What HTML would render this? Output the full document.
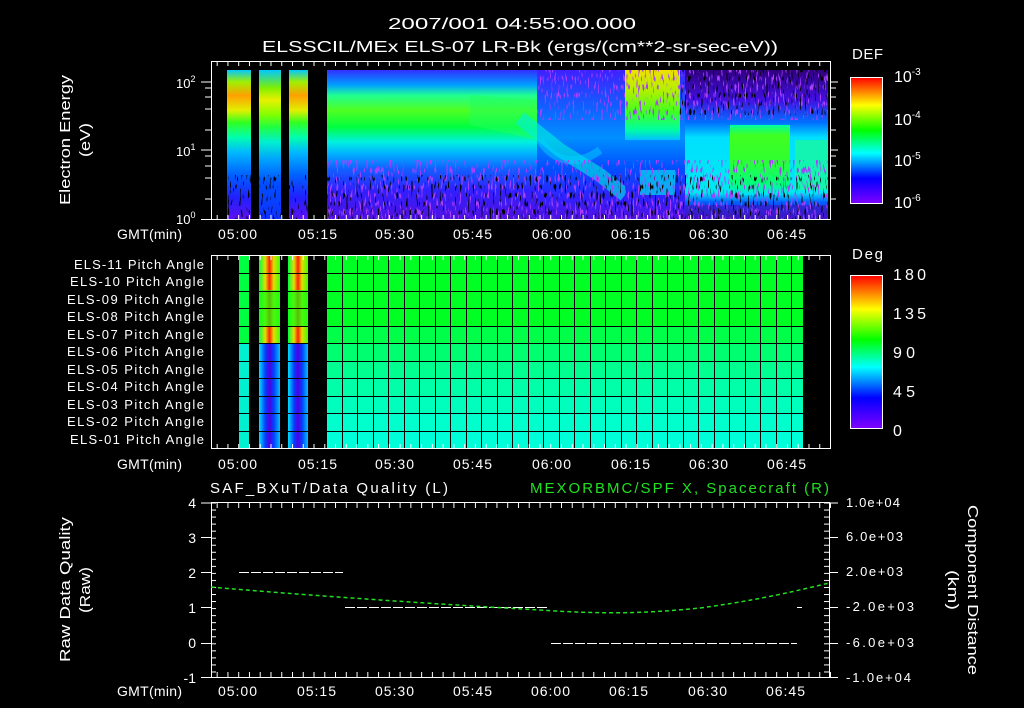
<!DOCTYPE html>
<html><head><meta charset="utf-8"><style>
html,body{margin:0;padding:0;background:#000;width:1024px;height:708px;overflow:hidden}
svg{display:block}
text{font-family:"Liberation Sans",sans-serif;fill:#fff}
</style></head><body>
<svg width="1024" height="708" viewBox="0 0 1024 708" xmlns="http://www.w3.org/2000/svg">
<defs>
<filter id="spk" x="0" y="0" width="100%" height="100%" filterUnits="objectBoundingBox"><feTurbulence type="fractalNoise" baseFrequency="0.6 0.12" numOctaves="1" seed="3"/><feColorMatrix type="matrix" values="0 0 0 0 0  0 0 0 0 0  0 0 0 0 0  14 0 0 0 -8.6"/></filter>
<filter id="spkp" x="0" y="0" width="100%" height="100%" filterUnits="objectBoundingBox"><feTurbulence type="fractalNoise" baseFrequency="0.6 0.12" numOctaves="1" seed="7"/><feColorMatrix type="matrix" values="0 0 0 0 0.4  0 0 0 0 0.05  0 0 0 0 1  14 0 0 0 -8.2"/></filter>
<linearGradient id="early" x1="0" y1="70" x2="0" y2="220" gradientUnits="userSpaceOnUse">
<stop offset="0" stop-color="#00c8ff"/><stop offset="0.08" stop-color="#a0f000"/><stop offset="0.17" stop-color="#ffa000"/><stop offset="0.27" stop-color="#e0f000"/><stop offset="0.35" stop-color="#30ff20"/><stop offset="0.45" stop-color="#00ffb0"/><stop offset="0.55" stop-color="#00b8ff"/><stop offset="0.7" stop-color="#0060ff"/><stop offset="0.85" stop-color="#2020ff"/><stop offset="1" stop-color="#6010f0"/>
</linearGradient>
<linearGradient id="early2" x1="0" y1="70" x2="0" y2="220" gradientUnits="userSpaceOnUse">
<stop offset="0" stop-color="#00c8ff"/><stop offset="0.12" stop-color="#80f000"/><stop offset="0.2" stop-color="#e8f000"/><stop offset="0.3" stop-color="#80ff00"/><stop offset="0.38" stop-color="#20ff40"/><stop offset="0.48" stop-color="#00f0d0"/><stop offset="0.6" stop-color="#00a0ff"/><stop offset="0.75" stop-color="#0050ff"/><stop offset="1" stop-color="#1030ff"/>
</linearGradient>
<linearGradient id="main" x1="0" y1="70" x2="0" y2="220" gradientUnits="userSpaceOnUse">
<stop offset="0" stop-color="#3030ff"/><stop offset="0.1" stop-color="#00a0ff"/><stop offset="0.17" stop-color="#20ff90"/><stop offset="0.27" stop-color="#50ff20"/><stop offset="0.38" stop-color="#00ff40"/><stop offset="0.48" stop-color="#00f0e0"/><stop offset="0.56" stop-color="#00b0ff"/><stop offset="0.66" stop-color="#1060ff"/><stop offset="0.8" stop-color="#3020ff"/><stop offset="1" stop-color="#5010e0"/>
</linearGradient>
<linearGradient id="mid" x1="0" y1="70" x2="0" y2="220" gradientUnits="userSpaceOnUse">
<stop offset="0" stop-color="#4020ff"/><stop offset="0.25" stop-color="#1060ff"/><stop offset="0.45" stop-color="#0090ff"/><stop offset="0.65" stop-color="#0050ff"/><stop offset="0.85" stop-color="#3020ff"/><stop offset="1" stop-color="#5010e0"/>
</linearGradient>
<linearGradient id="burst" x1="0" y1="70" x2="0" y2="140" gradientUnits="userSpaceOnUse">
<stop offset="0" stop-color="#f0e000"/><stop offset="0.3" stop-color="#b0f000"/><stop offset="0.6" stop-color="#40ff20"/><stop offset="0.85" stop-color="#00ffa0"/><stop offset="1" stop-color="#00c0ff"/>
</linearGradient>
<linearGradient id="late" x1="0" y1="70" x2="0" y2="220" gradientUnits="userSpaceOnUse">
<stop offset="0" stop-color="#300080"/><stop offset="0.2" stop-color="#4010e0"/><stop offset="0.35" stop-color="#0070ff"/><stop offset="0.45" stop-color="#00e0ff"/><stop offset="0.82" stop-color="#00e8f0"/><stop offset="0.88" stop-color="#0060ff"/><stop offset="1" stop-color="#4010d0"/>
</linearGradient>
<linearGradient id="lategreen" x1="0" y1="125" x2="0" y2="195" gradientUnits="userSpaceOnUse">
<stop offset="0" stop-color="#00ffa0"/><stop offset="0.15" stop-color="#40ff20"/><stop offset="0.5" stop-color="#30ff30"/><stop offset="0.85" stop-color="#00ff80"/><stop offset="1" stop-color="#00e0ff"/>
</linearGradient>
<linearGradient id="cbar1" x1="0" y1="0" x2="0" y2="1">
<stop offset="0" stop-color="#ff0000"/><stop offset="0.22" stop-color="#ffff00"/><stop offset="0.42" stop-color="#00ff00"/><stop offset="0.6" stop-color="#00ffff"/><stop offset="0.8" stop-color="#0000ff"/><stop offset="1" stop-color="#8000ff"/>
</linearGradient>
<linearGradient id="pa1" x1="0" y1="0" x2="1" y2="0">
<stop offset="0" stop-color="#00ff40"/><stop offset="0.3" stop-color="#e0e000"/><stop offset="0.5" stop-color="#ff2000"/><stop offset="0.7" stop-color="#e0e000"/><stop offset="1" stop-color="#40ff00"/>
</linearGradient>
<linearGradient id="pa2" x1="0" y1="0" x2="1" y2="0">
<stop offset="0" stop-color="#00e0ff"/><stop offset="0.3" stop-color="#0040ff"/><stop offset="0.5" stop-color="#5000e0"/><stop offset="0.7" stop-color="#0040ff"/><stop offset="1" stop-color="#00c0ff"/>
</linearGradient>
<pattern id="tt" x="0" y="0" width="10.76" height="10" patternUnits="userSpaceOnUse" patternTransform="translate(238.2 0)"><rect x="0" y="0" width="1" height="10" fill="#fff"/></pattern>
<pattern id="ltk" x="0" y="0" width="10" height="7.04" patternUnits="userSpaceOnUse" patternTransform="translate(0 502.5)"><rect x="0" y="0" width="10" height="1" fill="#fff"/></pattern>
</defs>

<text x="388" y="29" font-size="16" textLength="248" lengthAdjust="spacingAndGlyphs">2007/001 04:55:00.000</text>
<text x="262" y="52" font-size="16" textLength="516" lengthAdjust="spacingAndGlyphs">ELSSCIL/MEx ELS-07 LR-Bk  (ergs/(cm**2-sr-sec-eV))</text>

<rect x="227" y="70" width="24" height="150" fill="url(#early)"/>
<rect x="259" y="70" width="22" height="150" fill="url(#early2)"/>
<rect x="289" y="70" width="19" height="150" fill="url(#early)"/>
<rect x="327" y="70" width="210" height="150" fill="url(#main)"/>
<rect x="537" y="70" width="88" height="150" fill="url(#mid)"/>
<polygon points="470,95 537,100 537,140 470,125" fill="#20ff60" opacity="0.5"/>
<path d="M520,118 L560,150 L600,175 L625,195" stroke="#00f0e0" stroke-width="14" fill="none" opacity="0.6"/>
<path d="M540,140 C555,165 580,165 600,150" stroke="#00d0ff" stroke-width="8" fill="none" opacity="0.5"/>
<rect x="625" y="70" width="60" height="150" fill="url(#mid)"/>
<rect x="625" y="70" width="55" height="70" fill="url(#burst)"/>
<rect x="640" y="170" width="35" height="25" fill="#00e0f0" opacity="0.7"/>
<rect x="685" y="70" width="143" height="150" fill="url(#late)"/>
<rect x="730" y="125" width="60" height="70" fill="url(#lategreen)"/>
<rect x="795" y="140" width="33" height="50" fill="#20ff80" opacity="0.6"/>
<rect x="685" y="205" width="143" height="15" fill="#4010c0" opacity="0.6"/>
<rect x="327" y="160" width="501" height="60" filter="url(#spkp)"/>
<rect x="537" y="70" width="291" height="50" filter="url(#spkp)"/>
<rect x="227" y="175" width="601" height="45" filter="url(#spk)"/>
<rect x="680" y="70" width="148" height="45" filter="url(#spk)"/>
<rect x="251" y="62" width="8" height="158" fill="#000"/>
<rect x="281" y="62" width="8" height="158" fill="#000"/>
<rect x="308" y="62" width="19" height="158" fill="#000"/>
<rect x="211.5" y="61.5" width="619" height="158" fill="none" stroke="#fff"/>
<rect x="211" y="62" width="620" height="4" fill="url(#tt)"/>
<rect x="211" y="215" width="620" height="5" fill="url(#tt)"/>
<g stroke="#fff">
<line x1="201" y1="82" x2="211" y2="82"/><line x1="201" y1="150" x2="211" y2="150"/><line x1="201" y1="219.5" x2="211" y2="219.5"/>
<line x1="205" y1="88" x2="211" y2="88"/><line x1="205" y1="97" x2="211" y2="97"/><line x1="205" y1="109" x2="211" y2="109"/><line x1="205" y1="130" x2="211" y2="130"/>
<line x1="205" y1="156" x2="211" y2="156"/><line x1="205" y1="166" x2="211" y2="166"/><line x1="205" y1="178" x2="211" y2="178"/><line x1="205" y1="199" x2="211" y2="199"/>
<line x1="831" y1="82" x2="838" y2="82"/><line x1="831" y1="88" x2="836" y2="88"/><line x1="831" y1="97" x2="836" y2="97"/><line x1="831" y1="109" x2="836" y2="109"/><line x1="831" y1="130" x2="836" y2="130"/><line x1="831" y1="150" x2="838" y2="150"/><line x1="831" y1="156" x2="836" y2="156"/><line x1="831" y1="166" x2="836" y2="166"/><line x1="831" y1="178" x2="836" y2="178"/><line x1="831" y1="199" x2="836" y2="199"/>
</g>
<text x="176" y="88" font-size="13">10<tspan dy="-6" font-size="9">2</tspan></text>
<text x="176" y="156" font-size="13">10<tspan dy="-6" font-size="9">1</tspan></text>
<text x="176" y="224" font-size="13">10<tspan dy="-6" font-size="9">0</tspan></text>
<text transform="translate(70,205) rotate(-90)" font-size="15" textLength="130" lengthAdjust="spacingAndGlyphs">Electron Energy</text>
<text transform="translate(90,157) rotate(-90)" font-size="15" textLength="34" lengthAdjust="spacingAndGlyphs">(eV)</text>
<g font-size="14">
<text x="218" y="239" textLength="39">05:00</text><text x="298" y="239" textLength="39">05:15</text><text x="375" y="239" textLength="39">05:30</text><text x="453" y="239" textLength="39">05:45</text><text x="532" y="239" textLength="39">06:00</text><text x="611" y="239" textLength="39">06:15</text><text x="689" y="239" textLength="39">06:30</text><text x="767" y="239" textLength="39">06:45</text>
</g>
<text x="117" y="239" font-size="14" textLength="65">GMT(min)</text>

<text x="852" y="59" font-size="15" textLength="31">DEF</text>
<rect x="850.5" y="77.5" width="32" height="126" fill="url(#cbar1)" stroke="#fff"/>
<g font-size="16"><text x="894" y="82">10<tspan dy="-7" font-size="10">-3</tspan></text><text x="894" y="125">10<tspan dy="-7" font-size="10">-4</tspan></text><text x="894" y="166">10<tspan dy="-7" font-size="10">-5</tspan></text><text x="894" y="208">10<tspan dy="-7" font-size="10">-6</tspan></text></g>

<rect x="239" y="256" width="10" height="193" fill="#00ff40"/>
<rect x="239" y="344" width="10" height="105" fill="#00f0d0"/>
<rect x="259" y="256" width="21" height="88" fill="url(#pa1)"/>
<rect x="259" y="344" width="21" height="105" fill="url(#pa2)"/>
<rect x="288" y="256" width="20" height="88" fill="url(#pa1)"/>
<rect x="288" y="344" width="20" height="105" fill="url(#pa2)"/>
<rect x="259" y="290" width="21" height="36" fill="#10ff10" opacity="0.7"/>
<rect x="288" y="290" width="20" height="36" fill="#10ff10" opacity="0.7"/>
<rect x="327" y="256" width="476" height="71" fill="#00ff22"/>
<rect x="327" y="326" width="476" height="18" fill="#00ff48"/>
<rect x="327" y="344" width="476" height="18" fill="#00ff70"/>
<rect x="327" y="361" width="476" height="18" fill="#00ff90"/>
<rect x="327" y="379" width="476" height="18" fill="#00ffa8"/>
<rect x="327" y="396" width="476" height="18" fill="#00ffbc"/>
<rect x="327" y="414" width="476" height="18" fill="#00ffcc"/>
<rect x="327" y="431" width="476" height="18" fill="#00ffd8"/>
<g stroke="#000" stroke-width="1">
<path d="M239,273.5H803M239,291.5H803M239,308.5H803M239,326.5H803M239,343.5H803M239,361.5H803M239,378.5H803M239,396.5H803M239,413.5H803M239,431.5H803"/>
<path d="M342.5,256V449M357.5,256V449M373.5,256V449M388.5,256V449M404.5,256V449M419.5,256V449M435.5,256V449M450.5,256V449M466.5,256V449M481.5,256V449M497.5,256V449M512.5,256V449M528.5,256V449M543.5,256V449M559.5,256V449M574.5,256V449M590.5,256V449M605.5,256V449M621.5,256V449M636.5,256V449M652.5,256V449M667.5,256V449M683.5,256V449M698.5,256V449M714.5,256V449M729.5,256V449M745.5,256V449M760.5,256V449M776.5,256V449M791.5,256V449"/>
</g>
<rect x="211.5" y="255.5" width="619" height="193" fill="none" stroke="#fff"/>
<rect x="211" y="256" width="620" height="4" fill="url(#tt)"/>
<rect x="211" y="444" width="620" height="5" fill="url(#tt)"/>
<g font-size="13">
<text x="74" y="269" textLength="130">ELS-11 Pitch Angle</text><text x="70" y="286" textLength="134">ELS-10 Pitch Angle</text><text x="67" y="304" textLength="137">ELS-09 Pitch Angle</text><text x="67" y="321" textLength="137">ELS-08 Pitch Angle</text><text x="67" y="339" textLength="137">ELS-07 Pitch Angle</text><text x="67" y="356" textLength="137">ELS-06 Pitch Angle</text><text x="67" y="374" textLength="137">ELS-05 Pitch Angle</text><text x="67" y="391" textLength="137">ELS-04 Pitch Angle</text><text x="67" y="409" textLength="137">ELS-03 Pitch Angle</text><text x="67" y="426" textLength="137">ELS-02 Pitch Angle</text><text x="70" y="444" textLength="134">ELS-01 Pitch Angle</text>
</g>
<g font-size="14">
<text x="218" y="469" textLength="39">05:00</text><text x="298" y="469" textLength="39">05:15</text><text x="375" y="469" textLength="39">05:30</text><text x="453" y="469" textLength="39">05:45</text><text x="532" y="469" textLength="39">06:00</text><text x="611" y="469" textLength="39">06:15</text><text x="689" y="469" textLength="39">06:30</text><text x="767" y="469" textLength="39">06:45</text>
</g>
<text x="117" y="469" font-size="14" textLength="65">GMT(min)</text>

<text x="852" y="259" font-size="15" textLength="31">Deg</text>
<rect x="850.5" y="275.5" width="32" height="153" fill="url(#cbar1)" stroke="#fff"/>
<g font-size="16"><text x="893" y="280" textLength="33">180</text><text x="893" y="319" textLength="33">135</text><text x="893" y="358" textLength="22">90</text><text x="893" y="397" textLength="22">45</text><text x="893" y="436">0</text></g>

<text x="210" y="493" font-size="15" textLength="238">SAF_BXuT/Data Quality (L)</text>
<text x="530" y="493" font-size="15" textLength="299" style="fill:#20e020">MEXORBMC/SPF X, Spacecraft (R)</text>
<rect x="211.5" y="502.5" width="618" height="175" fill="none" stroke="#fff"/>
<rect x="211" y="503" width="620" height="5" fill="url(#tt)"/>
<rect x="211" y="672" width="620" height="6" fill="url(#tt)"/>
<rect x="211" y="503" width="5" height="175" fill="url(#ltk)"/>
<rect x="824" y="503" width="6" height="175" fill="url(#ltk)"/>
<g stroke="#fff"><line x1="201" y1="503" x2="211" y2="503"/><line x1="201" y1="537.5" x2="211" y2="537.5"/><line x1="201" y1="572.5" x2="211" y2="572.5"/><line x1="201" y1="607.5" x2="211" y2="607.5"/><line x1="201" y1="643.5" x2="211" y2="643.5"/><line x1="201" y1="677.5" x2="211" y2="677.5"/>
<line x1="830" y1="503" x2="838" y2="503"/><line x1="830" y1="537.5" x2="838" y2="537.5"/><line x1="830" y1="572.5" x2="838" y2="572.5"/><line x1="830" y1="607.5" x2="838" y2="607.5"/><line x1="830" y1="643.5" x2="838" y2="643.5"/><line x1="830" y1="677.5" x2="838" y2="677.5"/></g>
<g font-size="14" text-anchor="end"><text x="196" y="508">4</text><text x="196" y="543">3</text><text x="196" y="578">2</text><text x="196" y="613">1</text><text x="196" y="648">0</text><text x="196" y="683">-1</text></g>
<g font-size="13"><text x="846" y="507" textLength="54">1.0e+04</text><text x="846" y="541" textLength="57">6.0e+03</text><text x="846" y="576" textLength="57">2.0e+03</text><text x="846" y="611" textLength="68">-2.0e+03</text><text x="846" y="647" textLength="68">-6.0e+03</text><text x="846" y="682" textLength="65">-1.0e+04</text></g>
<path d="M239,572.5H343M345,607.5H549M551,643.5H797M797,607.5H802" stroke="#fff" stroke-dasharray="10,2" fill="none"/>
<path d="M211,587 C300,595 450,605 540,610 C600,614 640,614 700,608 C760,600 800,590 829,583" stroke="#20e020" stroke-width="1.5" stroke-dasharray="4,3" fill="none"/>
<text transform="translate(70,662) rotate(-90)" font-size="15" textLength="145" lengthAdjust="spacingAndGlyphs">Raw Data Quality</text>
<text transform="translate(90,613) rotate(-90)" font-size="15" textLength="46" lengthAdjust="spacingAndGlyphs">(Raw)</text>
<text transform="translate(968,505) rotate(90)" font-size="15" textLength="170" lengthAdjust="spacingAndGlyphs">Component Distance</text>
<text transform="translate(948,570) rotate(90)" font-size="15" textLength="40" lengthAdjust="spacingAndGlyphs">(km)</text>
<g font-size="14">
<text x="218" y="696" textLength="39">05:00</text><text x="297" y="696" textLength="39">05:15</text><text x="375" y="696" textLength="39">05:30</text><text x="453" y="696" textLength="39">05:45</text><text x="531" y="696" textLength="39">06:00</text><text x="609" y="696" textLength="39">06:15</text><text x="688" y="696" textLength="39">06:30</text><text x="766" y="696" textLength="39">06:45</text>
</g>
<text x="117" y="696" font-size="14" textLength="65">GMT(min)</text>
</svg>
</body></html>
